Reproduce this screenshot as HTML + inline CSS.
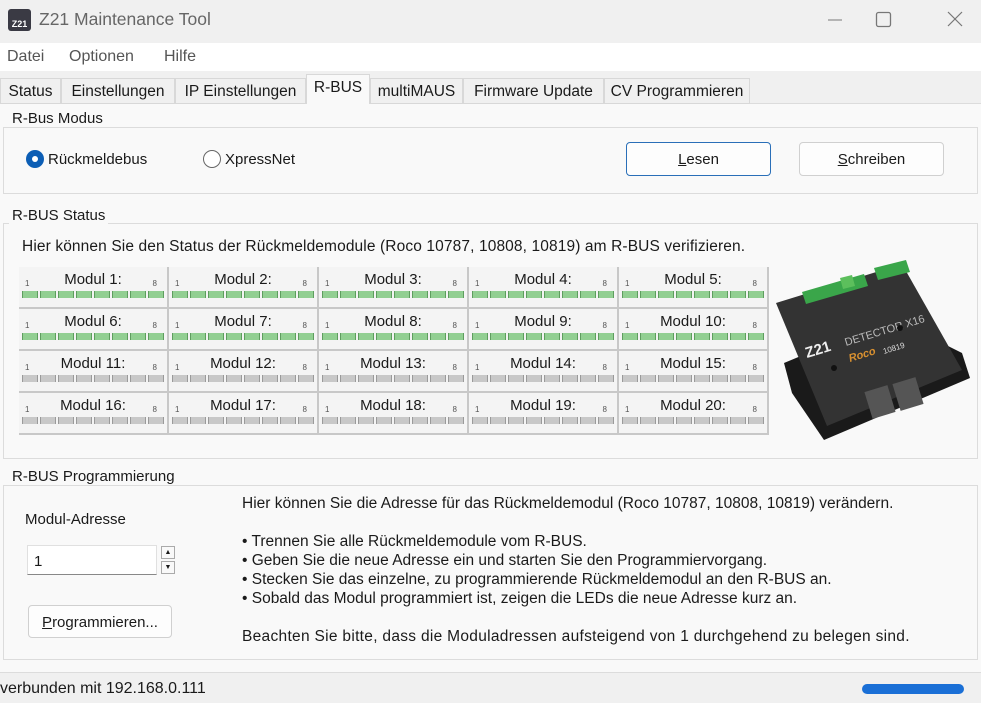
<!DOCTYPE html>
<html><head><meta charset="utf-8"><style>
*{margin:0;padding:0;box-sizing:border-box}
body{width:981px;height:703px;overflow:hidden;background:#f9f9f9;font-family:"Liberation Sans",sans-serif;font-size:15px;color:#1a1a1a;position:relative}
.a{position:absolute;white-space:nowrap}
.gb{position:absolute;border:1px solid #dcdcdc;}
.gl{position:absolute;background:#f9f9f9;padding:0 3px;font-size:15px}
.cell{position:absolute;width:150px;height:42px;border-right:2px solid #c8c8c8;border-bottom:2px solid #c8c8c8;background:#f4f4f4}
.cell .t{position:absolute;left:0;right:0;top:4px;text-align:center;font-size:15px}
.cell .n1{position:absolute;left:6px;top:12px;font-size:8px;color:#555}
.cell .n8{position:absolute;right:10px;top:12px;font-size:8px;color:#555}
.led{position:absolute;left:3px;top:24px;width:144px;height:7px}
.g{background:repeating-linear-gradient(90deg,#5f9d5f 0 1px,#92cf92 1px 15px,#5f9d5f 15px 16px,transparent 16px 18px)}
.y{background:repeating-linear-gradient(90deg,#9a9a9a 0 1px,#c8c8c8 1px 15px,#9a9a9a 15px 16px,transparent 16px 18px)}
.btn{position:absolute;border:1px solid #d0d0d0;border-radius:4px;background:#fdfdfd;text-align:center;font-size:15px}
.tab{position:absolute;top:78px;height:26px;border:1px solid #d8d8d8;text-align:center;padding-top:4px;font-size:15.5px}
</style></head><body>
<div class="a" style="left:0;top:0;width:981px;height:43px;background:#f0f0f0"></div>
<div class="a" style="left:8px;top:9px;width:23px;height:22px;background:#3a3a44;border-radius:3px;color:#fff;font-size:9px;font-weight:bold;text-align:center;padding-top:10px">Z21</div>
<div class="a" style="left:39px;top:9px;font-size:17.5px;color:#666">Z21 Maintenance Tool</div>
<svg class="a" style="left:820px;top:5px" width="160" height="30"><line x1="8" y1="15" x2="22" y2="15" stroke="#777" stroke-width="1"/><rect x="56.5" y="7.5" width="14" height="14" rx="2" fill="none" stroke="#777" stroke-width="1.3"/><line x1="128" y1="7" x2="142" y2="21" stroke="#777" stroke-width="1.2"/><line x1="142" y1="7" x2="128" y2="21" stroke="#777" stroke-width="1.2"/></svg>
<div class="a" style="left:0;top:43px;width:981px;height:28px;background:#fff"></div>
<div class="a" style="left:7px;top:48px;font-size:16px;color:#555">Datei</div>
<div class="a" style="left:69px;top:48px;font-size:16px;color:#555">Optionen</div>
<div class="a" style="left:164px;top:48px;font-size:16px;color:#555">Hilfe</div>
<div class="a" style="left:0;top:71px;width:981px;height:33px;background:#f0f0f0"></div>
<div class="a" style="left:0;top:103px;width:981px;height:1px;background:#dcdcdc"></div>
<div class="tab" style="left:0;width:61px">Status</div>
<div class="tab" style="left:61px;width:114px">Einstellungen</div>
<div class="tab" style="left:175px;width:131px">IP Einstellungen</div>
<div class="tab" style="left:306px;width:64px;top:74px;height:30px;border-bottom:none;background:#f9f9f9;padding-top:4px">R-BUS</div>
<div class="tab" style="left:370px;width:93px">multiMAUS</div>
<div class="tab" style="left:463px;width:141px">Firmware Update</div>
<div class="tab" style="left:604px;width:146px">CV Programmieren</div>

<div class="gb" style="left:3px;top:127px;width:975px;height:67px"></div>
<div class="gl" style="left:9px;top:110px">R-Bus Modus</div>
<div class="a" style="left:26px;top:150px;width:18px;height:18px;border-radius:50%;background:#0c5eb5"></div>
<div class="a" style="left:32px;top:156px;width:6px;height:6px;border-radius:50%;background:#fff"></div>
<div class="a" style="left:48px;top:151px">Rückmeldebus</div>
<div class="a" style="left:203px;top:150px;width:18px;height:18px;border-radius:50%;border:1px solid #666;background:#fff"></div>
<div class="a" style="left:225px;top:151px">XpressNet</div>
<div class="btn" style="left:626px;top:142px;width:145px;height:34px;border:1.5px solid #2a6fb8;padding-top:8px"><u>L</u>esen</div>
<div class="btn" style="left:799px;top:142px;width:145px;height:34px;padding-top:8px"><u>S</u>chreiben</div>

<div class="gb" style="left:3px;top:223px;width:975px;height:236px"></div>
<div class="gl" style="left:9px;top:207px">R-BUS Status</div>
<div class="a" style="left:22px;top:238px;font-size:15.5px;letter-spacing:0.12px">Hier können Sie den Status der Rückmeldemodule (Roco 10787, 10808, 10819) am R-BUS verifizieren.</div>

<div class="cell" style="left:19px;top:267px"><div class="n1">1</div><div class="t">Modul 1:</div><div class="n8">8</div><div class="led g"></div></div>
<div class="cell" style="left:169px;top:267px"><div class="n1">1</div><div class="t">Modul 2:</div><div class="n8">8</div><div class="led g"></div></div>
<div class="cell" style="left:319px;top:267px"><div class="n1">1</div><div class="t">Modul 3:</div><div class="n8">8</div><div class="led g"></div></div>
<div class="cell" style="left:469px;top:267px"><div class="n1">1</div><div class="t">Modul 4:</div><div class="n8">8</div><div class="led g"></div></div>
<div class="cell" style="left:619px;top:267px"><div class="n1">1</div><div class="t">Modul 5:</div><div class="n8">8</div><div class="led g"></div></div>
<div class="cell" style="left:19px;top:309px"><div class="n1">1</div><div class="t">Modul 6:</div><div class="n8">8</div><div class="led g"></div></div>
<div class="cell" style="left:169px;top:309px"><div class="n1">1</div><div class="t">Modul 7:</div><div class="n8">8</div><div class="led g"></div></div>
<div class="cell" style="left:319px;top:309px"><div class="n1">1</div><div class="t">Modul 8:</div><div class="n8">8</div><div class="led g"></div></div>
<div class="cell" style="left:469px;top:309px"><div class="n1">1</div><div class="t">Modul 9:</div><div class="n8">8</div><div class="led g"></div></div>
<div class="cell" style="left:619px;top:309px"><div class="n1">1</div><div class="t">Modul 10:</div><div class="n8">8</div><div class="led g"></div></div>
<div class="cell" style="left:19px;top:351px"><div class="n1">1</div><div class="t">Modul 11:</div><div class="n8">8</div><div class="led y"></div></div>
<div class="cell" style="left:169px;top:351px"><div class="n1">1</div><div class="t">Modul 12:</div><div class="n8">8</div><div class="led y"></div></div>
<div class="cell" style="left:319px;top:351px"><div class="n1">1</div><div class="t">Modul 13:</div><div class="n8">8</div><div class="led y"></div></div>
<div class="cell" style="left:469px;top:351px"><div class="n1">1</div><div class="t">Modul 14:</div><div class="n8">8</div><div class="led y"></div></div>
<div class="cell" style="left:619px;top:351px"><div class="n1">1</div><div class="t">Modul 15:</div><div class="n8">8</div><div class="led y"></div></div>
<div class="cell" style="left:19px;top:393px"><div class="n1">1</div><div class="t">Modul 16:</div><div class="n8">8</div><div class="led y"></div></div>
<div class="cell" style="left:169px;top:393px"><div class="n1">1</div><div class="t">Modul 17:</div><div class="n8">8</div><div class="led y"></div></div>
<div class="cell" style="left:319px;top:393px"><div class="n1">1</div><div class="t">Modul 18:</div><div class="n8">8</div><div class="led y"></div></div>
<div class="cell" style="left:469px;top:393px"><div class="n1">1</div><div class="t">Modul 19:</div><div class="n8">8</div><div class="led y"></div></div>
<div class="cell" style="left:619px;top:393px"><div class="n1">1</div><div class="t">Modul 20:</div><div class="n8">8</div><div class="led y"></div></div>

<svg class="a" style="left:772px;top:258px" width="200" height="185" viewBox="0 0 200 185">
<polygon points="12,105 20,135 52,182 198,120 190,95 120,60" fill="#1a1a1a"/>
<polygon points="4,45 130,6 190,112 55,168" fill="#333"/>
<polygon points="30,34 92,16 96,28 34,46" fill="#3aa64a"/>
<polygon points="68,20 80,17 83,28 71,31" fill="#5cbf5c"/>
<polygon points="102,10 134,2 138,14 106,22" fill="#3aa64a"/>
<text x="35" y="100" fill="#eee" font-size="15" font-weight="bold" font-family="Liberation Sans" transform="rotate(-17 35 100)">Z21</text>
<text x="74" y="88" fill="#bbb" font-size="11" font-family="Liberation Sans" transform="rotate(-17 74 88)">DETECTOR X16</text>
<text x="78" y="104" fill="#d89030" font-size="11" font-style="italic" font-weight="bold" font-family="Liberation Sans" transform="rotate(-17 78 104)">Roco</text>
<text x="112" y="96" fill="#ddd" font-size="8" font-family="Liberation Sans" transform="rotate(-17 112 96)">10819</text>
<circle cx="62" cy="110" r="3" fill="#111"/><circle cx="128" cy="70" r="3" fill="#111"/>
<rect x="96" y="130" width="24" height="28" fill="#555" transform="rotate(-17 108 144)"/>
<rect x="124" y="122" width="24" height="28" fill="#555" transform="rotate(-17 136 136)"/>
</svg>

<div class="gb" style="left:3px;top:485px;width:975px;height:175px"></div>
<div class="gl" style="left:9px;top:468px">R-BUS Programmierung</div>
<div class="a" style="left:25px;top:511px">Modul-Adresse</div>
<div class="a" style="left:27px;top:545px;width:130px;height:30px;background:#fff;border:1px solid #e0e0e0;border-bottom:1.5px solid #888;padding:7px 6px">1</div>
<div class="a" style="left:161px;top:546px;width:14px;height:13px;border:1px solid #aaa;font-size:7px;text-align:center;line-height:11px">▲</div>
<div class="a" style="left:161px;top:561px;width:14px;height:13px;border:1px solid #aaa;font-size:7px;text-align:center;line-height:11px">▼</div>
<div class="btn" style="left:28px;top:605px;width:144px;height:33px;padding-top:8px"><u>P</u>rogrammieren...</div>
<div class="a" style="left:242px;top:494px;font-size:15.5px;line-height:19px">Hier können Sie die Adresse für das Rückmeldemodul (Roco 10787, 10808, 10819) verändern.<br><br>• Trennen Sie alle Rückmeldemodule vom R-BUS.<br>• Geben Sie die neue Adresse ein und starten Sie den Programmiervorgang.<br>• Stecken Sie das einzelne, zu programmierende Rückmeldemodul an den R-BUS an.<br>• Sobald das Modul programmiert ist, zeigen die LEDs die neue Adresse kurz an.<br><br><span style="letter-spacing:0.3px">Beachten Sie bitte, dass die Moduladressen aufsteigend von 1 durchgehend zu belegen sind.</span></div>

<div class="a" style="left:0;top:672px;width:981px;height:31px;background:#f0f0f0;border-top:1px solid #dcdcdc"></div>
<div class="a" style="left:0;top:680px;font-size:16px">verbunden mit 192.168.0.111</div>
<div class="a" style="left:862px;top:684px;width:102px;height:10px;border-radius:5px;background:#1a6fd6"></div>
</body></html>
